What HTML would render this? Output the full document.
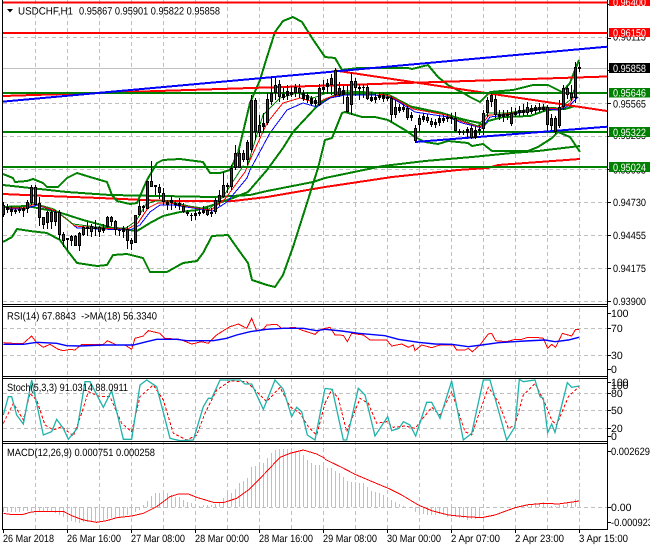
<!DOCTYPE html>
<html>
<head>
<meta charset="utf-8">
<title>USDCHF,H1</title>
<style>
html,body{margin:0;padding:0;background:#fff;width:650px;height:550px;overflow:hidden}
svg{display:block}
text{font-family:"Liberation Sans",sans-serif;font-size:10.5px;fill:#000}
.w{fill:#fff}
polyline,path{fill:none}
.n{vector-effect:non-scaling-stroke}
</style>
</head>
<body>
<svg width="650" height="550" viewBox="0 0 650 550" shape-rendering="crispEdges">
<rect width="650" height="550" fill="#fff"/>

<!-- grid -->
<path stroke="#c0c0c0" stroke-dasharray="4 3" d="M35.5 0V529M67.5 0V529M99.5 0V529M131.5 0V529M163.5 0V529M195.5 0V529M227.5 0V529M259.5 0V529M291.5 0V529M323.5 0V529M355.5 0V529M387.5 0V529M419.5 0V529M451.5 0V529M483.5 0V529M515.5 0V529M547.5 0V529M579.5 0V529"/>
<path stroke="#c0c0c0" stroke-dasharray="4 3" d="M3 37.5H607M3 103.5H607M3 136.5H607M3 169.5H607M3 202.5H607M3 235.5H607M3 268.5H607M3 301.5H607M3 328.5H607M3 355.5H607M3 393.5H607M3 410.5H607M3 428.5H607M3 507.5H607"/>
<path stroke="#c0c0c0" d="M3 68.5H607"/>

<!-- long MAs -->
<polyline stroke="#008000" stroke-width="2" points="3,185 67,192 110,195 213,197 250,195 267,191 313,182 325,178 383,166 425,161 472,157 512,153 538,151 580,146"/>
<polyline stroke="#ff0000" stroke-width="2" points="3,194 47,196 100,198 167,201 233,201 267,197 325,187 392,177 458,170 488,168 498,165 580,159"/>

<!-- Bollinger -->
<polyline stroke="#008000" stroke-width="2" stroke-linejoin="round" points="3,174 13,178 15,182 27,181 33,179 43,183 47,187 58,187 67,178 77,173 90,177 107,182 112,195 117,201 130,204 137,203 147,180 157,163 163,160 180,159 203,162 210,173 220,173 230,170 238,153 250,103 260,80 267,57 275,32 283,21 293,17 302,22 312,38 325,57 335,58 342,70 358,68 408,68 412,69 428,65 438,77 448,85 465,94 470,97 480,102 490,92 513,90 533,85 548,85 562,92 570,83 575,70 579,60"/>
<polyline stroke="#008000" stroke-width="2" stroke-linejoin="round" points="3,242 12,237 17,229 30,231 47,233 60,240 67,250 77,263 97,266 107,265 113,255 127,254 143,258 150,272 167,272 183,263 197,261 203,253 212,236 228,235 240,252 248,263 252,280 267,285 275,287 283,275 293,247 307,203 318,168 325,140 332,138 342,113 345,112 362,117 375,117 388,120 405,130 415,137 425,142 438,144 448,141 468,143 472,146 483,144 492,151 528,151 538,147 552,138 558,132 570,137 580,152"/>
<polyline stroke="#008000" stroke-width="2" stroke-linejoin="round" points="3,207 27,206 58,212 83,220 113,228 137,231 150,223 163,216 180,212 197,210 213,205 233,198 248,192 267,170 283,148 293,132 320,103 335,95 382,93 392,98 412,107 442,113 458,118 470,121 480,123 483,127 488,121 503,117 530,116 547,110 565,109 575,106"/>

<!-- thin moving averages -->
<polyline stroke="#0000ff" points="7,209 25,209 37,205 58,212 77,228 100,229 130,230 140,225 150,212 160,205 173,205 193,208 213,211 227,202 247,178 250,170 270,133 287,110 303,103 317,107 330,98 345,95 375,95 392,98 415,112 448,117 462,123 482,128 490,117 507,115 543,109 560,110 570,105 578,97"/>
<polyline stroke="#ff0000" points="7,208 23,208 35,204 56,211 75,226 98,228 128,229 138,223 148,208 158,203 171,203 191,207 211,210 225,199 245,172 250,160 267,123 283,103 300,98 317,103 327,98 345,93 373,93 390,96 413,109 446,115 460,121 480,127 489,115 507,114 543,108 560,109 570,103 577,92"/>
<polyline stroke="#008000" points="7,207 21,207 33,203 54,209 73,224 96,227 126,228 136,221 146,204 156,201 169,201 189,206 209,209 223,197 243,166 247,167 263,115 280,98 297,93 313,98 327,93 345,91 371,92 388,94 411,106 444,113 458,119 478,126 488,113 507,113 543,107 560,108 570,100 576,85"/>

<!-- trend and level lines -->
<path stroke="#ff0000" stroke-width="2" d="M3 2.5H607M3 33H607"/>
<polyline stroke="#ff0000" stroke-width="2" points="3,96 607,76.5"/>
<polyline stroke="#ff0000" stroke-width="2" points="335,70.5 607,111"/>
<path stroke="#008000" stroke-width="2" d="M3 93H607M3 132H607M3 167H607"/>
<polyline stroke="#0000ff" stroke-width="2" points="3,101.6 607,46.7"/>
<polyline stroke="#0000ff" stroke-width="2" points="415,142 607,126.7"/>

<!-- candles: wicks -->
<path stroke="#000" d="M3.5 202V217M7.5 204V213M11.5 206V216M15.5 208V214M19.5 207V213M23.5 207V217M27.5 200V213M31.5 185V205M35.5 185V205M39.5 197V226M43.5 217V229M47.5 211V229M51.5 210V229M55.5 210V226M59.5 210V240M63.5 232V247M67.5 238V250M71.5 235V246M75.5 235V246M79.5 232V251M83.5 226V236M87.5 222V236M91.5 224V237M95.5 220V236M99.5 226V237M103.5 224V233M107.5 216V228M111.5 216V226M115.5 220V235M119.5 228V236M123.5 226V238M127.5 226V249M131.5 238V250M135.5 215V243M139.5 200V216M143.5 205V212M147.5 181V209M151.5 161V187M155.5 185V195M159.5 184V199M163.5 188V205M167.5 200V210M171.5 196V210M175.5 200V208M179.5 198V210M183.5 203V213M187.5 210V216M191.5 213V221M195.5 210V220M199.5 208V216M203.5 206V214M207.5 207V216M211.5 208V217M215.5 198V214M219.5 190V206M223.5 172V198M227.5 183V193M231.5 165V190M235.5 145V170M239.5 150V168M243.5 150V162M247.5 140V165M251.5 95V152M255.5 98V140M259.5 115V137M263.5 113V133M267.5 93V125M271.5 77V105M275.5 78V100M279.5 80V102M283.5 88V100M287.5 85V100M291.5 86V97M295.5 84V97M299.5 84V98M303.5 90V101M307.5 92V103M311.5 96V106M315.5 98V106M319.5 84V106M323.5 80V94M327.5 79V94M331.5 74V95M335.5 68V97M339.5 82V97M343.5 86V104M347.5 85V113M351.5 72V115M355.5 78V96M359.5 84V100M363.5 84V98M367.5 85V100M371.5 92V102M375.5 93V103M379.5 92V100M383.5 93V102M387.5 94V101M391.5 96V122M395.5 100V118M399.5 104V113M403.5 104V112M407.5 106V120M411.5 112V121M415.5 125V143M419.5 115V132M423.5 113V122M427.5 114V123M431.5 118V127M435.5 119V128M439.5 116V126M443.5 115V123M447.5 114V122M451.5 113V124M455.5 112V132M459.5 129V135M463.5 130V135M467.5 127V137M471.5 125V139M475.5 127V139M479.5 125V135M483.5 110V135M487.5 97V117M491.5 93V107M495.5 95V118M499.5 110V120M503.5 110V122M507.5 110V120M511.5 107V126M515.5 108V117M519.5 106V116M523.5 104V116M527.5 102V115M531.5 105V114M535.5 105V114M539.5 103V112M543.5 104V112M547.5 105V131M551.5 114V130M555.5 116V134M559.5 100V128M563.5 85V110M567.5 86V99M571.5 85V101M575.5 62V103M579.5 62V72"/>
<!-- candles: bodies -->
<path stroke="#000" stroke-width="3" d="M3.5 205V215M7.5 207V210M11.5 209V212M15.5 210V212M19.5 209V211M23.5 208V211M27.5 202V209M31.5 187V203M35.5 187V205M39.5 203V218M43.5 217V225M47.5 212V223M51.5 212V222M55.5 212V222M59.5 212V235M63.5 234V241M67.5 238V240M71.5 236V241M75.5 236V246M79.5 233V246M83.5 227V235M87.5 227V229M91.5 226V232M95.5 227V229M99.5 227V232M103.5 228V231M107.5 217V227M111.5 217V222M115.5 221V230M119.5 230V231M123.5 228V232M127.5 229V241M131.5 240V244M135.5 215V243M139.5 206V215M143.5 206V208M147.5 181V209M151.5 181V187M155.5 185V187M159.5 187V193M163.5 193V202M167.5 202V205M171.5 200V203M175.5 203V205M179.5 203V206M183.5 206V212M187.5 212V214M191.5 215V216M195.5 213V216M199.5 212V214M203.5 210V213M207.5 210V215M211.5 212V214M215.5 200V212M219.5 195V202M223.5 185V197M227.5 185V187M231.5 168V187M235.5 153V168M239.5 153V168M243.5 153V160M247.5 142V160M251.5 100V150M255.5 100V132M259.5 125V133M263.5 123V127M267.5 99V123M271.5 93V102M275.5 85V93M279.5 84V97M283.5 94V98M287.5 91V96M291.5 92V95M295.5 87V93M299.5 88V93M303.5 93V99M307.5 95V100M311.5 98V104M315.5 100V104M319.5 88V105M323.5 87V90M327.5 83V87M331.5 78V85M335.5 70V95M339.5 88V95M343.5 90V95M347.5 97V112M351.5 81V105M355.5 81V88M359.5 87V89M363.5 87V88M367.5 87V99M371.5 97V101M375.5 97V100M379.5 95V98M383.5 95V99M387.5 97V99M391.5 98V115M395.5 107V115M399.5 107V111M403.5 107V110M407.5 108V118M411.5 115V118M415.5 128V141M419.5 118V125M423.5 116V120M427.5 117V121M431.5 121V125M435.5 122V125M439.5 118V123M443.5 118V121M447.5 117V119M451.5 117V119M455.5 118V131M459.5 131V133M463.5 132V133M467.5 129V133M471.5 128V138M475.5 130V138M479.5 129V131M483.5 113V129M487.5 100V113M491.5 95V102M495.5 99V115M499.5 114V117M503.5 114V117M507.5 114V116M511.5 113V124M515.5 112V115M519.5 110V113M523.5 110V113M527.5 107V113M531.5 108V112M535.5 107V111M539.5 107V110M543.5 107V110M547.5 107V125M551.5 118V126M555.5 118V132M559.5 107V126M563.5 88V107M567.5 88V95M571.5 93V98M575.5 67V98M579.5 67V69"/>
<path stroke="#e00000" d="M35.5 188V204M43.5 218V224M59.5 213V234M63.5 235V240M75.5 237V245M91.5 227V231M99.5 228V231M111.5 218V221M115.5 222V229M127.5 230V240M131.5 241V243M151.5 182V186M159.5 188V192M163.5 194V201M183.5 207V211M207.5 211V214M243.5 154V159M255.5 101V131M259.5 126V132M275.5 86V92M279.5 85V96M295.5 88V92M299.5 89V92M335.5 71V94M347.5 98V111M355.5 82V87M367.5 88V98M391.5 99V114M407.5 109V117M427.5 118V120M431.5 122V124M455.5 119V130M471.5 129V137M495.5 100V114M547.5 108V124M555.5 119V131M567.5 89V94M571.5 94V97"/>
<path stroke="#006400" d="M3.5 206V214M27.5 203V208M31.5 188V202M39.5 204V217M47.5 213V222M51.5 213V221M55.5 213V221M71.5 237V240M79.5 234V245M83.5 228V234M107.5 218V226M135.5 216V242M139.5 207V214M147.5 182V208M215.5 201V211M219.5 196V201M223.5 186V196M231.5 169V186M235.5 154V167M239.5 154V167M247.5 143V159M251.5 101V149M267.5 100V122M271.5 94V101M319.5 89V104M331.5 79V84M339.5 89V94M351.5 82V104M395.5 108V114M415.5 129V140M419.5 119V124M483.5 114V128M487.5 101V112M491.5 96V101M511.5 114V123M527.5 108V112M551.5 119V125M559.5 108V125M563.5 89V106M575.5 68V97"/>

<!-- RSI -->
<g transform="translate(0 300) scale(.33333)">
<polyline class="n" stroke="#ff0000" points="10,128 40,130 70,130 95,108 110,128 130,142 150,133 175,148 190,152 210,148 225,150 245,133 310,133 322,122 350,135 375,135 395,148 405,115 430,108 445,92 480,100 495,115 540,118 575,132 605,125 625,130 650,105 670,92 690,80 715,72 740,85 755,55 770,92 790,88 800,75 830,73 845,85 885,82 910,92 945,103 960,90 975,85"/>
<polyline class="n" stroke="#0000ff" stroke-width="1.4" shape-rendering="auto" points="10,133 70,133 110,127 170,130 200,137 240,138 310,135 400,135 440,125 470,118 530,118 560,122 640,122 680,115 710,105 750,95 800,88 850,85 910,85 950,92 975,88"/>
</g>
<g transform="translate(325 300) scale(.33333)">
<polyline class="n" stroke="#ff0000" points="0,85 15,82 30,105 55,106 67,125 80,100 115,105 135,120 185,120 200,138 230,132 250,142 265,135 270,152 290,135 320,143 345,135 385,135 395,150 420,150 430,145 442,155 465,135 490,102 500,100 512,122 545,125 570,118 590,118 605,113 640,113 655,115 668,145 680,133 692,142 712,100 740,108 752,88 762,88"/>
<polyline class="n" stroke="#0000ff" stroke-width="1.4" shape-rendering="auto" points="0,88 50,93 100,100 180,107 220,118 280,127 330,132 380,133 430,140 470,135 520,128 600,123 660,120 690,125 730,120 762,112"/>
</g>

<!-- Stochastic -->
<g transform="translate(0 300) scale(.33333)">
<polyline class="n" stroke="#ff0000" stroke-dasharray="3 2" points="10,370 40,310 70,360 90,280 110,300 135,375 160,390 185,380 220,408 245,340 265,275 300,290 330,290 365,370 395,395 420,290 460,255 490,300 520,400 560,420 590,405 615,340 650,270 690,243 740,245 770,275 800,305 840,262 870,320 900,340 925,380 950,405 975,310"/>
<polyline class="n" stroke="#20b2aa" stroke-width="1.3" shape-rendering="auto" points="10,345 25,290 35,290 50,345 70,372 95,240 130,405 155,395 170,358 190,385 205,418 232,385 255,245 270,245 310,322 335,272 370,418 395,418 420,255 440,240 470,260 510,415 540,422 580,420 610,320 625,295 635,295 660,240 720,240 735,252 755,252 790,328 825,240 850,268 875,350 890,322 905,335 922,405 945,420 975,265"/>
</g>
<g transform="translate(325 300) scale(.33333)">
<polyline class="n" stroke="#ff0000" stroke-dasharray="3 2" points="0,310 20,270 40,295 65,395 105,295 130,310 155,370 185,365 205,382 240,378 270,385 320,322 345,345 380,275 420,395 440,405 490,262 520,305 550,385 570,375 595,285 630,250 660,310 680,360 695,375 730,290 762,260"/>
<polyline class="n" stroke="#20b2aa" stroke-width="1.3" shape-rendering="auto" points="0,265 22,268 55,420 65,420 100,265 120,285 150,408 188,350 200,392 222,385 235,365 255,375 272,408 305,307 320,307 345,355 380,243 415,420 440,400 475,240 495,240 545,420 570,380 583,238 595,245 630,240 645,290 655,295 668,398 680,372 690,397 727,248 740,262 762,258"/>
</g>

<!-- MACD histogram -->
<path stroke="#c0c0c0" d="M3.5 507V512M7.5 507V512M11.5 507V512M15.5 507V512M19.5 507V512M23.5 507V511M27.5 507V511M31.5 507V511M35.5 507V511M39.5 507V512M43.5 507V512M47.5 507V511M51.5 507V512M55.5 507V513M59.5 507V515M63.5 507V517M67.5 507V519M71.5 507V521M75.5 507V522M79.5 507V523M83.5 507V522M87.5 507V522M91.5 507V521M95.5 507V521M99.5 507V521M103.5 507V520M107.5 507V519M111.5 507V518M115.5 507V517M119.5 507V517M123.5 507V516M127.5 507V515M131.5 507V514M135.5 507V512M139.5 507V510M143.5 507V505M147.5 507V501M151.5 507V496M155.5 507V493M159.5 507V493M163.5 507V493M167.5 507V493M171.5 507V495M175.5 507V497M179.5 507V497M183.5 507V500M187.5 507V502M191.5 507V503M195.5 507V504M199.5 507V506M203.5 507V505M207.5 507V505M211.5 507V505M215.5 507V504M219.5 507V503M223.5 507V498M227.5 507V493M231.5 507V493M235.5 507V489M239.5 507V483M243.5 507V481M247.5 507V478M251.5 507V467M255.5 507V466M259.5 507V464M263.5 507V463M267.5 507V458M271.5 507V453M275.5 507V450M279.5 507V449M283.5 507V449M287.5 507V449M291.5 507V450M295.5 507V451M299.5 507V452M303.5 507V455M307.5 507V460M311.5 507V463M315.5 507V465M319.5 507V465M323.5 507V465M327.5 507V468M331.5 507V468M335.5 507V471M339.5 507V473M343.5 507V477M347.5 507V481M351.5 507V482M355.5 507V482M359.5 507V483M363.5 507V483M367.5 507V487M371.5 507V491M375.5 507V492M379.5 507V493M383.5 507V495M387.5 507V497M391.5 507V500M395.5 507V502M399.5 507V504M403.5 507V506M407.5 507V507M411.5 507V508M415.5 507V512M419.5 507V514M423.5 507V514M427.5 507V515M431.5 507V515M435.5 507V515M439.5 507V514M443.5 507V515M447.5 507V517M451.5 507V517M455.5 507V517M459.5 507V518M463.5 507V518M467.5 507V520M471.5 507V519M475.5 507V519M479.5 507V518M483.5 507V508M487.5 507V508M515.5 507V506M519.5 507V506M523.5 507V505M527.5 507V505M531.5 507V504M535.5 507V503M539.5 507V503M543.5 507V502M547.5 507V503M551.5 507V506M555.5 507V506M559.5 507V505M563.5 507V505M567.5 507V503M571.5 507V502M575.5 507V499M579.5 507V489"/>
<g transform="translate(0 440) scale(.33333)">
<polyline class="n" stroke="#ff0000" points="10,220 30,223 70,223 90,217 110,214 190,214 215,227 250,240 290,247 320,242 350,233 395,228 430,220 470,200 510,170 535,162 565,162 590,172 640,187 670,188 710,175 745,150 790,105 840,52 870,40 910,30 950,42 975,55"/>
</g>
<g transform="translate(325 440) scale(.33333)">
<polyline class="n" stroke="#ff0000" points="0,58 50,82 90,103 130,120 190,145 230,165 280,195 320,212 370,225 420,230 470,233 510,225 570,203 610,194 660,190 700,192 762,183"/>
</g>

<!-- frame -->
<path stroke="#000" d="M2.5 0V529.5M607.5 0V529.5M2 304.5H608M2 306.5H608M2 376.5H608M2 378.5H608M2 441.5H608M2 443.5H608M2 529.5H608"/>
<path stroke="#000" d="M3.5 529V533M67.5 529V533M131.5 529V533M195.5 529V533M259.5 529V533M323.5 529V533M387.5 529V533M451.5 529V533M515.5 529V533M579.5 529V533"/>
<path stroke="#000" d="M608 4.5h3M608 38.5h3M608 70.5h3M608 103.5h3M608 136.5h3M608 169.5h3M608 202.5h3M608 235.5h3M608 268.5h3M608 301.5h3M608 313.5h3M608 328.5h3M608 355.5h3M608 369.5h3M608 382.5h3M608 393.5h3M608 410.5h3M608 428.5h3M608 436.5h3M608 451.5h3M608 507.5h3M608 522.5h3"/>

<!-- header triangle -->
<polygon points="7,9 13,9 10,12.5" fill="#000" shape-rendering="auto"/>

<!-- text -->
<g shape-rendering="auto" text-rendering="geometricPrecision">
<text x="18" y="14.5" textLength="55" lengthAdjust="spacingAndGlyphs">USDCHF,H1</text>
<text x="79" y="14.5" textLength="141" lengthAdjust="spacingAndGlyphs">0.95867 0.95901 0.95822 0.95858</text>
<text x="7" y="319.5" textLength="150" lengthAdjust="spacingAndGlyphs" xml:space="preserve">RSI(14) 67.8843  -&gt;MA(18) 56.3340</text>
<text x="7" y="391" textLength="121" lengthAdjust="spacingAndGlyphs">Stoch(5,3,3) 91.0314 88.0911</text>
<text x="7" y="456" textLength="148" lengthAdjust="spacingAndGlyphs">MACD(12,26,9) 0.000751 0.000258</text>

<!-- price scale -->
<text x="613" y="40.5" textLength="33" lengthAdjust="spacingAndGlyphs">0.96115</text>
<text x="613" y="107.5" textLength="33" lengthAdjust="spacingAndGlyphs">0.95565</text>
<text x="613" y="139" textLength="33" lengthAdjust="spacingAndGlyphs">0.95285</text>
<text x="613" y="173.5" textLength="33" lengthAdjust="spacingAndGlyphs">0.95005</text>
<text x="613" y="206" textLength="33" lengthAdjust="spacingAndGlyphs">0.94730</text>
<text x="613" y="239" textLength="33" lengthAdjust="spacingAndGlyphs">0.94455</text>
<text x="613" y="272" textLength="33" lengthAdjust="spacingAndGlyphs">0.94175</text>
<text x="613" y="305" textLength="33" lengthAdjust="spacingAndGlyphs">0.93900</text>

<rect x="609" y="-3" width="41" height="9" fill="#ff0000"/>
<text class="w" x="613" y="6" textLength="33" lengthAdjust="spacingAndGlyphs">0.96400</text>
<rect x="609" y="28" width="41" height="9" fill="#ff0000"/>
<text class="w" x="613" y="36.5" textLength="33" lengthAdjust="spacingAndGlyphs">0.96150</text>
<rect x="609" y="63" width="41" height="10" fill="#000"/>
<text class="w" x="613" y="72" textLength="33" lengthAdjust="spacingAndGlyphs">0.95858</text>
<rect x="609" y="88" width="41" height="9.5" fill="#008000"/>
<text class="w" x="613" y="96.5" textLength="33" lengthAdjust="spacingAndGlyphs">0.95646</text>
<rect x="609" y="127" width="41" height="10" fill="#008000"/>
<text class="w" x="613" y="136" textLength="33" lengthAdjust="spacingAndGlyphs">0.95322</text>
<rect x="609" y="162" width="41" height="10" fill="#008000"/>
<text class="w" x="613" y="171" textLength="33" lengthAdjust="spacingAndGlyphs">0.95024</text>

<!-- indicator scales -->
<text x="611" y="317">100</text>
<text x="611" y="332">70</text>
<text x="611" y="359">30</text>
<text x="611" y="373">0</text>
<text x="611" y="386">100</text>
<text x="611" y="389">100</text>
<text x="611" y="397">80</text>
<text x="611" y="414">50</text>
<text x="611" y="432">20</text>
<text x="611" y="440">0</text>
<text x="611" y="455" textLength="39" lengthAdjust="spacingAndGlyphs">0.002629</text>
<text x="611" y="511">0.00</text>
<text x="611" y="526" textLength="42" lengthAdjust="spacingAndGlyphs">-0.000923</text>

<!-- time scale -->
<text x="3" y="542" textLength="51" lengthAdjust="spacingAndGlyphs">26 Mar 2018</text>
<text x="67" y="542" textLength="54" lengthAdjust="spacingAndGlyphs">26 Mar 16:00</text>
<text x="131" y="542" textLength="54" lengthAdjust="spacingAndGlyphs">27 Mar 08:00</text>
<text x="195" y="542" textLength="54" lengthAdjust="spacingAndGlyphs">28 Mar 00:00</text>
<text x="259" y="542" textLength="54" lengthAdjust="spacingAndGlyphs">28 Mar 16:00</text>
<text x="323" y="542" textLength="54" lengthAdjust="spacingAndGlyphs">29 Mar 08:00</text>
<text x="387" y="542" textLength="54" lengthAdjust="spacingAndGlyphs">30 Mar 00:00</text>
<text x="451" y="542" textLength="49" lengthAdjust="spacingAndGlyphs">2 Apr 07:00</text>
<text x="515" y="542" textLength="49" lengthAdjust="spacingAndGlyphs">2 Apr 23:00</text>
<text x="579" y="542" textLength="49" lengthAdjust="spacingAndGlyphs">3 Apr 15:00</text>
</g>
</svg>
</body>
</html>
